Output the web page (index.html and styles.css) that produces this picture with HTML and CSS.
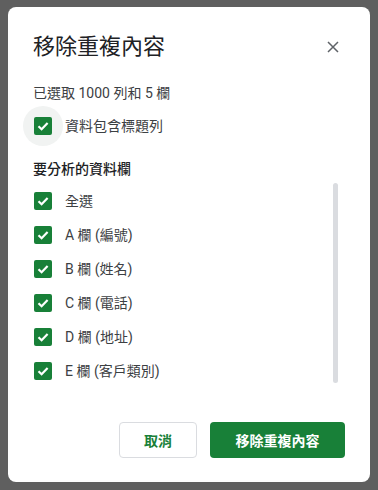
FILE: index.html
```html
<!DOCTYPE html>
<html lang="zh-Hant">
<head>
<meta charset="utf-8">
<link rel="stylesheet" href="styles.css">
</head>
<body>
<div class="dialog">
  <div class="header">
    <h1 class="title">移除重複內容</h1>
    <button class="close" aria-label="關閉">
      <svg width="12" height="12" viewBox="0 0 12 12"><path d="M1 1L11 11M11 1L1 11" stroke="#5f6368" stroke-width="1.5" fill="none"/></svg>
    </button>
  </div>
  <p class="subtitle">已選取 1000 列和 5 欄</p>
  <div class="row header-row">
    <span class="ripple"><span class="box"><svg width="18" height="18" viewBox="0 0 18 18"><path d="M4.5 9.2L7.6 12.2L13.6 6" stroke="#fff" stroke-width="2.2" fill="none"/></svg></span></span>
    <span class="label">資料包含標題列</span>
  </div>
  <div class="section">要分析的資料欄</div>
  <div class="listwrap">
    <div class="list">
      <div class="row"><span class="box"><svg width="18" height="18" viewBox="0 0 18 18"><path d="M4.5 9.2L7.6 12.2L13.6 6" stroke="#fff" stroke-width="2.2" fill="none"/></svg></span><span class="label">全選</span></div>
      <div class="row"><span class="box"><svg width="18" height="18" viewBox="0 0 18 18"><path d="M4.5 9.2L7.6 12.2L13.6 6" stroke="#fff" stroke-width="2.2" fill="none"/></svg></span><span class="label">A 欄 (編號)</span></div>
      <div class="row"><span class="box"><svg width="18" height="18" viewBox="0 0 18 18"><path d="M4.5 9.2L7.6 12.2L13.6 6" stroke="#fff" stroke-width="2.2" fill="none"/></svg></span><span class="label">B 欄 (姓名)</span></div>
      <div class="row"><span class="box"><svg width="18" height="18" viewBox="0 0 18 18"><path d="M4.5 9.2L7.6 12.2L13.6 6" stroke="#fff" stroke-width="2.2" fill="none"/></svg></span><span class="label">C 欄 (電話)</span></div>
      <div class="row"><span class="box"><svg width="18" height="18" viewBox="0 0 18 18"><path d="M4.5 9.2L7.6 12.2L13.6 6" stroke="#fff" stroke-width="2.2" fill="none"/></svg></span><span class="label">D 欄 (地址)</span></div>
      <div class="row"><span class="box"><svg width="18" height="18" viewBox="0 0 18 18"><path d="M4.5 9.2L7.6 12.2L13.6 6" stroke="#fff" stroke-width="2.2" fill="none"/></svg></span><span class="label">E 欄 (客戶類別)</span></div>
    </div>
    <div class="scrollbar"></div>
  </div>
  <div class="footer">
    <button class="btn cancel">取消</button>
    <button class="btn primary">移除重複內容</button>
  </div>
</div>
</body>
</html>
```
FILE: styles.css
```css
* { box-sizing: border-box; }
html, body { margin: 0; padding: 0; }
body {
  background: #5f5f5f;
  padding: 7px 8px;
  font-family: Roboto, "Noto Sans CJK TC", sans-serif;
  color: #3c4043;
}
.dialog {
  width: 362px;
  height: 475px;
  background: #fff;
  border-radius: 8px;
  padding: 26px 0 0 0;
  display: flex;
  flex-direction: column;
}
.header {
  display: flex;
  align-items: center;
  justify-content: space-between;
  height: 28px;
  padding: 0 29px 0 25px;
}
.title {
  margin: 0;
  font-size: 22px;
  font-weight: 400;
  line-height: 28px;
  color: #202124;
}
.close {
  border: 0;
  background: none;
  padding: 0;
  width: 16px;
  height: 16px;
  display: flex;
  align-items: center;
  justify-content: center;
}
.subtitle {
  margin: 22px 0 0 0;
  padding-left: 25px;
  font-size: 14px;
  line-height: 20px;
  color: #3c4043;
}
.row {
  display: flex;
  align-items: center;
  height: 34px;
  padding-left: 26px;
}
.header-row {
  margin-top: 6px;
  padding-left: 15px;
}
.ripple {
  width: 40px;
  height: 40px;
  border-radius: 50%;
  background: #f1f3f2;
  display: flex;
  align-items: center;
  justify-content: center;
  flex-shrink: 0;
  margin-right: -11px;
}
.box {
  width: 18px;
  height: 18px;
  border-radius: 2px;
  background: #188038;
  display: flex;
  flex-shrink: 0;
}
.label {
  margin-left: 13px;
  font-size: 14px;
  line-height: 20px;
  color: #3c4043;
}
.section {
  margin-top: 16px;
  padding-left: 25px;
  font-size: 14px;
  line-height: 20px;
  font-weight: 500;
  color: #202124;
}
.listwrap {
  display: flex;
  margin-top: 5px;
  height: 204px;
}
.list {
  flex: 1;
  overflow: hidden;
}
.scrollbar {
  width: 5px;
  height: 200px;
  margin: -1px 32px 0 0;
  border-radius: 3px;
  background: #dadce0;
}
.footer {
  display: flex;
  justify-content: flex-end;
  gap: 13px;
  padding: 0 25px 0 0;
  margin-top: 34px;
}
.btn {
  height: 36px;
  border-radius: 4px;
  font-family: Roboto, "Noto Sans CJK TC", sans-serif;
  font-size: 14px;
  font-weight: 700;
  padding: 0;
}
.cancel {
  width: 78px;
  background: #fff;
  border: 1px solid #dadce0;
  color: #188038;
}
.primary {
  width: 135px;
  background: #188038;
  border: 0;
  color: #fff;
}
```
